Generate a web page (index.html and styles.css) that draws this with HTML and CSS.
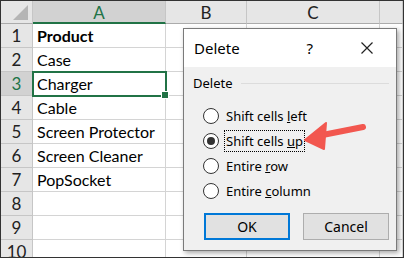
FILE: index.html
```
<!DOCTYPE html>
<html>
	<head>
		<meta charset="UTF-8">
		<title>Delete</title>
		<link rel="stylesheet" href="styles.css">
	</head>
	<body>
		<div class="shot">
			<div class="sheet">
				<div class="hd corner"><span class="tri"></span></div>
				<div class="hd col sel">A</div>
				<div class="hd col">B</div>
				<div class="hd col">C</div>
				<div class="hd col last"></div>

				<div class="hd row">1</div><div class="cell bold">Product</div><div class="cell"></div><div class="cell"></div><div class="cell"></div>
				<div class="hd row">2</div><div class="cell">Case</div><div class="cell"></div><div class="cell"></div><div class="cell"></div>
				<div class="hd row sel">3</div><div class="cell active">Charger</div><div class="cell"></div><div class="cell"></div><div class="cell"></div>
				<div class="hd row">4</div><div class="cell">Cable</div><div class="cell"></div><div class="cell"></div><div class="cell"></div>
				<div class="hd row">5</div><div class="cell">Screen Protector</div><div class="cell"></div><div class="cell"></div><div class="cell"></div>
				<div class="hd row">6</div><div class="cell">Screen Cleaner</div><div class="cell"></div><div class="cell"></div><div class="cell"></div>
				<div class="hd row">7</div><div class="cell">PopSocket</div><div class="cell"></div><div class="cell"></div><div class="cell"></div>
				<div class="hd row">8</div><div class="cell"></div><div class="cell"></div><div class="cell"></div><div class="cell"></div>
				<div class="hd row">9</div><div class="cell"></div><div class="cell"></div><div class="cell"></div><div class="cell"></div>
				<div class="hd row">10</div><div class="cell"></div><div class="cell"></div><div class="cell"></div><div class="cell"></div>
			</div>

			<div class="dialog">
				<div class="titlebar">
					<span class="title">Delete</span>
					<span class="help">?</span>
					<svg class="close" width="12" height="12" viewBox="0 0 12 12">
						<path d="M0.5 0.5 L11.5 11.5 M11.5 0.5 L0.5 11.5" stroke="#222" stroke-width="1.2" fill="none"/>
					</svg>
				</div>
				<div class="body">
					<div class="group"><span>Delete</span><i></i></div>
					<ul class="opts">
						<li><span class="radio"></span><span class="lbl">Shift cells <u>l</u>eft</span></li>
						<li><span class="radio on"></span><span class="lbl focus">Shift cells <u>u</u>p</span></li>
						<li><span class="radio"></span><span class="lbl">Entire <u>r</u>ow</span></li>
						<li><span class="radio"></span><span class="lbl">Entire <u>c</u>olumn</span></li>
					</ul>
					<div class="buttons">
						<div class="btn default">OK</div>
						<div class="btn">Cancel</div>
					</div>
				</div>
			</div>

			<svg class="arrow" width="404" height="258" viewBox="0 0 404 258">
				<line x1="320" y1="135.5" x2="363" y2="127" stroke="#f2574f" stroke-width="6" stroke-linecap="round"/>
				<polygon points="305,140 326,123 324,149" fill="#f2574f" stroke="#f2574f" stroke-width="2" stroke-linejoin="round"/>
			</svg>
		</div>
	</body>
</html>
```
FILE: styles.css
```
*{
	margin: 0;
	padding: 0;
	list-style: none;
	box-sizing: border-box;
}
body{
	background-color: #fff;
}
.shot{
	position: relative;
	width: 404px;
	height: 258px;
	border: 1px solid #333;
	overflow: hidden;
	background-color: #fff;
}
/* sheet */
.sheet{
	display: grid;
	grid-template-columns: 32px 133px 81px 133px 1fr;
	grid-template-rows: 23px;
	grid-auto-rows: 24px;
	font-family: Lato, "Liberation Sans", sans-serif;
	font-size: 16px;
	color: #000;
}
.hd{
	display: flex;
	align-items: center;
	justify-content: center;
	background-color: #e6e6e6;
	border-right: 1px solid #c6c6c6;
	border-bottom: 1px solid #c6c6c6;
	color: #222;
	font-size: 17px;
}
.hd.col{
	border-bottom: 1px solid #ababab;
}
.hd.sel{
	background-color: #d2d2d2;
	color: #217346;
}
.hd.col.sel{
	border-bottom: 2px solid #217346;
	padding-top: 1px;
}
.hd.row.sel{
	border-right: 1px solid #217346;
}
.corner{
	position: relative;
	border-bottom: 1px solid #ababab;
}
.tri{
	position: absolute;
	right: 4px;
	bottom: 3px;
	width: 0;
	height: 0;
	border-left: 15px solid transparent;
	border-bottom: 15px solid #b5b5b5;
}
.cell{
	border-right: 1px solid #d4d4d4;
	border-bottom: 1px solid #d4d4d4;
	padding: 0 4px;
	display: flex;
	align-items: center;
	white-space: nowrap;
}
.bold{
	font-weight: bold;
}
.cell.active{
	position: relative;
	outline: 2px solid #217346;
	outline-offset: -1px;
	z-index: 1;
}
.cell.active::after{
	content: "";
	position: absolute;
	right: -4px;
	bottom: -4px;
	width: 6px;
	height: 6px;
	background-color: #217346;
	border: 1px solid #fff;
}
/* dialog */
.dialog{
	position: absolute;
	left: 182px;
	top: 27px;
	width: 214px;
	height: 223px;
	background-color: #f0f0f0;
	border: 1px solid #7a7a7a;
	box-shadow: 2px 2px 5px rgba(0,0,0,0.35);
	font-family: "Noto Sans", "Open Sans", sans-serif;
	font-size: 13px;
	color: #000;
	display: flex;
	flex-direction: column;
}
.titlebar{
	height: 38px;
	background-color: #fff;
	display: flex;
	align-items: center;
	padding: 0 23px 0 10px;
}
.title{
	font-size: 15px;
	flex: 1;
}
.help{
	font-size: 15px;
	margin-right: 48px;
}
.close{
	display: block;
}
.body{
	flex: 1;
	padding: 6px 7px 10px 9px;
	display: flex;
	flex-direction: column;
}
.group{
	display: flex;
	align-items: center;
	gap: 8px;
	height: 20px;
}
.group i{
	flex: 1;
	height: 1px;
	background-color: #dcdcdc;
}
.opts{
	margin-top: 10px;
	padding-left: 10px;
	display: flex;
	flex-direction: column;
}
.opts li{
	display: flex;
	align-items: center;
	height: 25px;
}
.radio{
	width: 16px;
	height: 16px;
	border-radius: 50%;
	border: 1px solid #333;
	background-color: #fff;
	margin-right: 7px;
	display: flex;
	align-items: center;
	justify-content: center;
}
.radio.on::after{
	content: "";
	width: 8px;
	height: 8px;
	border-radius: 50%;
	background-color: #333;
}
.lbl{
	padding: 1px 1px;
	border: 1px solid transparent;
	margin-left: -2px;
}
.lbl.focus{
	border: 1px dotted #000;
}
.buttons{
	margin-top: auto;
	display: flex;
	justify-content: space-between;
	padding: 0 0 0 11px;
}
.btn{
	width: 86px;
	height: 27px;
	background-color: #e1e1e1;
	border: 1px solid #adadad;
	display: flex;
	align-items: center;
	justify-content: center;
	font-size: 14px;
}
.btn.default{
	border: 2px solid #0078d7;
}
.arrow{
	position: absolute;
	left: -1px;
	top: -1px;
	pointer-events: none;
}
```
